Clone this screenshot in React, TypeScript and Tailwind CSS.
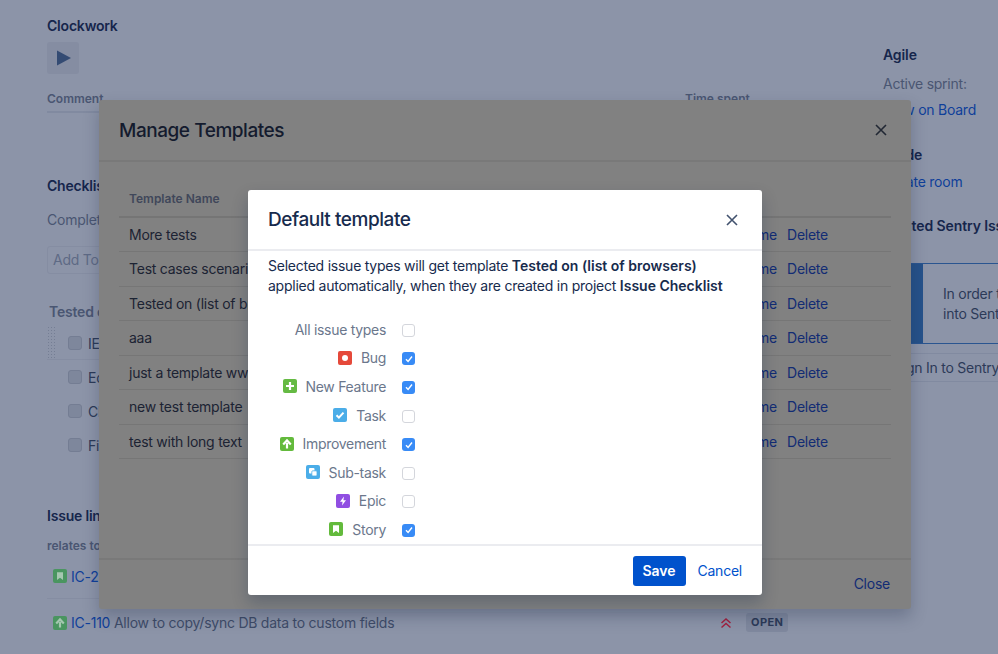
import type { ReactNode } from "react";

const templates = ["More tests", "Test cases scenarios", "Tested on (list of browsers)", "aaa", "just a template www", "new test template", "test with long text"];

function CloseIcon({ className }: { className: string }) {
  return (
    <svg viewBox="0 0 12 12" className={className} fill="none" stroke="currentColor" strokeWidth="1.6">
      <path d="M1 1l10 10M11 1L1 11" />
    </svg>
  );
}

function TypeIcon({ bg, children }: { bg: string; children: ReactNode }) {
  return (
    <svg viewBox="0 0 14 14" className="w-[14px] h-[14px] shrink-0">
      <rect width="14" height="14" rx="2" fill={bg} />
      {children}
    </svg>
  );
}

const bugIcon = <TypeIcon bg="#e5493a"><circle cx="7" cy="7" r="3" fill="#fff" /></TypeIcon>;
const featureIcon = <TypeIcon bg="#65ba43"><path d="M7 3v8M3 7h8" stroke="#fff" strokeWidth="2.2" /></TypeIcon>;
const taskIcon = <TypeIcon bg="#4bade8"><path d="M3.5 7.2l2.4 2.4 4.6-5" stroke="#fff" strokeWidth="2" fill="none" /></TypeIcon>;
const improvementIcon = <TypeIcon bg="#63ba3c"><path d="M7 11.5V6M3.2 7.4L7 3.4l3.8 4" stroke="#fff" strokeWidth="2.2" fill="none" /></TypeIcon>;
const subtaskIcon = (
  <TypeIcon bg="#4bade8">
    <rect x="3" y="3" width="5.5" height="5.5" rx="1" fill="#fff" />
    <rect x="5.8" y="5.8" width="5.2" height="5.2" rx="1" fill="#fff" stroke="#4bade8" strokeWidth="0.8" />
  </TypeIcon>
);
const epicIcon = <TypeIcon bg="#904ee2"><path d="M8 2.6L4 7.8h2.6L6 11.4l4-5.2H7.4z" fill="#fff" /></TypeIcon>;
const storyIcon = <TypeIcon bg="#63ba3c"><path d="M4 3.2h6v7.8L7 8.8 4 11z" fill="#fff" /></TypeIcon>;

const issueTypes = [
  { label: "All issue types", icon: null, checked: false },
  { label: "Bug", icon: bugIcon, checked: true },
  { label: "New Feature", icon: featureIcon, checked: true },
  { label: "Task", icon: taskIcon, checked: false },
  { label: "Improvement", icon: improvementIcon, checked: true },
  { label: "Sub-task", icon: subtaskIcon, checked: false },
  { label: "Epic", icon: epicIcon, checked: false },
  { label: "Story", icon: storyIcon, checked: true },
];

function CheckBox({ checked }: { checked: boolean }) {
  if (!checked) return <div className="w-[13px] h-[13px] rounded-[3px] bg-white border border-[#d4d6dc]" />;
  return (
    <div className="w-[13px] h-[13px] rounded-[3px] bg-[#388bf6] flex items-center justify-center">
      <svg viewBox="0 0 10 10" className="w-[10px] h-[10px]" fill="none" stroke="#fff" strokeWidth="1.4">
        <path d="M2 5.2l2.1 2.3L8 2.5" />
      </svg>
    </div>
  );
}

function GreyCheck({ label }: { label: string }) {
  return (
    <div className="flex items-center h-[34px] pl-[21px] gap-[6px]">
      <div className="w-[14px] h-[14px] rounded-[3px] bg-[#7e879c] border border-[#747d93]" />
      <span className="text-[#2c3a58]">{label}</span>
    </div>
  );
}

function Page() {
  return (
    <div className="flex text-[14px] text-[#2c3a58]">
      <div className="w-[836px] shrink-0 pl-[47px] pt-[18px]">
        <h3 className="font-semibold tracking-[-0.2px] text-[#16264c] leading-4">Clockwork</h3>
        <div className="mt-2 w-8 h-8 rounded-[3px] bg-[#858da2] flex items-center justify-center">
          <svg viewBox="0 0 16 16" className="w-4 h-4 ml-0.5"><path d="M1 0.5L15 8 1 15.5z" fill="#344b73" /></svg>
        </div>
        <div className="mt-[17px] flex text-[12px] font-semibold tracking-[0px] text-[#4a5672] leading-4">
          <span className="w-[638px]">Comment</span>
          <span>Time spent</span>
        </div>
        <div className="mt-1 h-0.5 w-[500px] bg-[#818aa0]" />
        <h3 className="mt-[65px] font-semibold tracking-[-0.2px] text-[#16264c] leading-4">Checklist</h3>
        <p className="mt-[17px] text-[#4a5672] leading-[18px]">Completed</p>
        <div className="mt-[17px] h-7 w-[400px] rounded-[3px] border border-[#858da2] px-[5px] text-[#5e6a85] leading-[26px]">Add Todo</div>
        <h4 className="mt-[30px] ml-0.5 font-semibold tracking-[-0.2px] text-[#4a5672] leading-4">Tested on</h4>
        <div className="mt-1.5 relative border-b border-[#858da2] w-[400px] h-[34px]">
          <div className="absolute left-0 top-0 bottom-0 w-[9px] bg-[radial-gradient(#757e94_1px,transparent_1px)] bg-[length:3px_3px]" />
          <GreyCheck label="IE" />
        </div>
        <GreyCheck label="Edge" />
        <GreyCheck label="Chrome" />
        <GreyCheck label="Firefox" />
        <h3 className="mt-[46px] font-semibold tracking-[-0.2px] text-[#16264c] leading-4">Issue links</h3>
        <p className="mt-[14px] text-[12px] font-semibold tracking-[0px] text-[#4a5672] leading-4">relates to</p>
        <div className="mt-[14px] h-[16px] flex items-center pl-[6px] gap-1">
          <TypeIcon bg="#4a9560"><path d="M4 3.2h6v7.8L7 8.8 4 11z" fill="#a5c7b0" /></TypeIcon>
          <span className="text-[#0f3f9a]">IC-215</span>
        </div>
        <div className="mt-[14px] h-px w-[600px] bg-[#858da2]" />
        <div className="mt-[13px] flex items-center">
          <div className="w-[673px] flex items-center pl-[6px] gap-1">
            <TypeIcon bg="#4a9560"><path d="M7 11.5V6M3.2 7.4L7 3.4l3.8 4" stroke="#a5c7b0" strokeWidth="2.2" fill="none" /></TypeIcon>
            <span><span className="text-[#0f3f9a]">IC-110</span> <span className="text-[#3f4c68]">Allow to copy/sync DB data to custom fields</span></span>
          </div>
          <svg viewBox="0 0 12 12" className="w-3 h-3" fill="none" stroke="#a3203f" strokeWidth="1.5"><path d="M1.5 6L6 2l4.5 4M1.5 10.5L6 6.5l4.5 4" /></svg>
          <span className="ml-[14px] h-[19px] px-[5px] rounded-[3px] bg-[#7f889e] text-[11px] font-bold tracking-[0.4px] leading-[19px] text-[#2c3a58]">OPEN</span>
        </div>
      </div>
      <div className="pl-[47px] pt-[47px] whitespace-nowrap">
        <h3 className="font-semibold tracking-[-0.1px] text-[#16264c] leading-4">Agile</h3>
        <p className="mt-[12px] text-[#4a5672] leading-[18px]">Active sprint:</p>
        <p className="mt-2 text-[#0f3f9a] leading-[18px]">View on Board</p>
        <h3 className="mt-[28px] font-semibold tracking-[-0.1px] text-[#16264c] leading-4">Guide</h3>
        <p className="mt-[10px] text-[#0f3f9a] leading-[18px]">Create room</p>
        <h3 className="mt-[27px] font-semibold tracking-[-0.1px] text-[#16264c] leading-4">Related Sentry Issues</h3>
        <div className="mt-[29px] -ml-[4px] flex h-[81px] w-[300px] border border-[#2a5590]">
          <div className="w-3 bg-[#26528a] ml-[31px]" />
          <div className="pl-5 pt-[20px] leading-[20px] text-[#2c3a58]">In order to link<br />into Sentry</div>
        </div>
        <div className="mt-[9px] -ml-[4px] h-[29px] w-[300px] border-y border-[#818aa0] pl-[15px] leading-[27px] text-[#2c3a58]">Sign In to Sentry</div>
      </div>
    </div>
  );
}

function ManageTemplates() {
  return (
    <div className="absolute left-[99px] top-[100px] w-[812px] h-[509px] rounded-[3px] bg-[#818181] shadow-[0_8px_16px_rgba(20,30,60,0.25)] flex flex-col text-[14px] text-[#1c2333]">
      <div className="h-[62px] shrink-0 border-b-2 border-[#797979] px-5 flex items-center justify-between">
        <h2 className="text-[19px] font-medium tracking-[-0.45px] text-[#141b2e] pt-[3px]">Manage Templates</h2>
        <CloseIcon className="w-3 h-3 text-[#222834] mr-1" />
      </div>
      <div className="flex-1 px-5 pt-[27px]">
        <div className="h-[28.5px] border-b-2 border-[#757575] pl-2.5 text-[12px] font-semibold tracking-[0px] text-[#40475a] leading-5">Template Name</div>
        {templates.map((name) => (
          <div key={name} className="h-[34.5px] border-b border-[#767676] pl-2.5 pr-[63px] flex items-center justify-between">
            <span>{name}</span>
            <span className="text-[#122c74] flex gap-2.5">
              <span>Rename</span>
              <span>Delete</span>
            </span>
          </div>
        ))}
      </div>
      <div className="h-[51px] shrink-0 border-t-2 border-[#797979] pr-[21px] pt-[13px] text-right text-[#122c74]">Close</div>
    </div>
  );
}

function DefaultTemplate() {
  return (
    <div className="absolute left-[248px] top-[190px] w-[514px] h-[405px] rounded-[3px] bg-white shadow-[0_8px_16px_rgba(9,30,66,0.25)] flex flex-col text-[14px] text-[#172b4d]">
      <div className="h-[61px] shrink-0 border-b-2 border-[#ebecf0] px-5 flex items-center justify-between">
        <h2 className="text-[19px] font-medium tracking-[-0.45px] pt-0.5">Default template</h2>
        <CloseIcon className="w-3 h-3 text-[#42526e] mr-1" />
      </div>
      <div className="flex-1 px-5 pt-[5px]">
        <p className="leading-[20px]">
          Selected issue types will get template <b className="font-semibold tracking-[0px]">Tested on (list of browsers)</b>
          <br />
          applied automatically, when they are created in project <b className="font-semibold tracking-[0px]">Issue Checklist</b>
        </p>
        <div className="mt-[19px]">
          {issueTypes.map((t) => (
            <div key={t.label} className="h-[28.6px] flex items-center">
              <div className="w-[118px] flex items-center justify-end gap-[9px] whitespace-nowrap tracking-[-0.3px] text-[#6b778c]">
                {t.icon}
                <span>{t.label}</span>
              </div>
              <div className="ml-4 mt-0.5">
                <CheckBox checked={t.checked} />
              </div>
            </div>
          ))}
        </div>
      </div>
      <div className="h-[52px] shrink-0 border-t-2 border-[#ebecf0] pr-5 flex items-center justify-end gap-3">
        <button className="h-[30px] w-[53px] rounded-[3px] bg-[#0052cc] text-white font-semibold tracking-[0px]">Save</button>
        <button className="text-[#0052cc]">Cancel</button>
      </div>
    </div>
  );
}

export default function App() {
  return (
    <div className="relative w-[998px] h-[654px] overflow-hidden bg-[#8c94a8] tracking-[-0.24px] font-['Inter','Liberation_Sans',sans-serif]">
      <Page />
      <ManageTemplates />
      <DefaultTemplate />
    </div>
  );
}
